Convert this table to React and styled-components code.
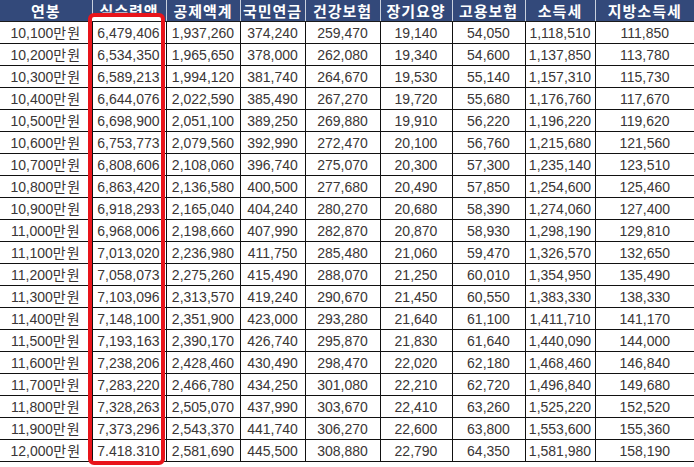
import React from "react";
import styled, { createGlobalStyle } from "styled-components";

const GlobalStyle = createGlobalStyle`
  body {
    margin: 0;
    background: #ffffff;
    font-family: "Liberation Sans", Arial, "Noto Sans CJK KR", sans-serif;
  }
`;

const columns = [
  { title: "연봉", width: 92 },
  { title: "실수령액", width: 74 },
  { title: "공제액계", width: 74 },
  { title: "국민연금", width: 65 },
  { title: "건강보험", width: 75 },
  { title: "장기요양", width: 72 },
  { title: "고용보험", width: 73 },
  { title: "소득세", width: 70 },
  { title: "지방소득세", width: 99 },
];

const rows = [
  ["10,100", "6,479,406", "1,937,260", "374,240", "259,470", "19,140", "54,050", "1,118,510", "111,850"],
  ["10,200", "6,534,350", "1,965,650", "378,000", "262,080", "19,340", "54,600", "1,137,850", "113,780"],
  ["10,300", "6,589,213", "1,994,120", "381,740", "264,670", "19,530", "55,140", "1,157,310", "115,730"],
  ["10,400", "6,644,076", "2,022,590", "385,490", "267,270", "19,720", "55,680", "1,176,760", "117,670"],
  ["10,500", "6,698,900", "2,051,100", "389,250", "269,880", "19,910", "56,220", "1,196,220", "119,620"],
  ["10,600", "6,753,773", "2,079,560", "392,990", "272,470", "20,100", "56,760", "1,215,680", "121,560"],
  ["10,700", "6,808,606", "2,108,060", "396,740", "275,070", "20,300", "57,300", "1,235,140", "123,510"],
  ["10,800", "6,863,420", "2,136,580", "400,500", "277,680", "20,490", "57,850", "1,254,600", "125,460"],
  ["10,900", "6,918,293", "2,165,040", "404,240", "280,270", "20,680", "58,390", "1,274,060", "127,400"],
  ["11,000", "6,968,006", "2,198,660", "407,990", "282,870", "20,870", "58,930", "1,298,190", "129,810"],
  ["11,100", "7,013,020", "2,236,980", "411,750", "285,480", "21,060", "59,470", "1,326,570", "132,650"],
  ["11,200", "7,058,073", "2,275,260", "415,490", "288,070", "21,250", "60,010", "1,354,950", "135,490"],
  ["11,300", "7,103,096", "2,313,570", "419,240", "290,670", "21,450", "60,550", "1,383,330", "138,330"],
  ["11,400", "7,148,100", "2,351,900", "423,000", "293,280", "21,640", "61,100", "1,411,710", "141,170"],
  ["11,500", "7,193,163", "2,390,170", "426,740", "295,870", "21,830", "61,640", "1,440,090", "144,000"],
  ["11,600", "7,238,206", "2,428,460", "430,490", "298,470", "22,020", "62,180", "1,468,460", "146,840"],
  ["11,700", "7,283,220", "2,466,780", "434,250", "301,080", "22,210", "62,720", "1,496,840", "149,680"],
  ["11,800", "7,328,263", "2,505,070", "437,990", "303,670", "22,410", "63,260", "1,525,220", "152,520"],
  ["11,900", "7,373,296", "2,543,370", "441,740", "306,270", "22,600", "63,800", "1,553,600", "155,360"],
  ["12,000", "7.418.310", "2,581,690", "445,500", "308,880", "22,790", "64,350", "1,581,980", "158,190"],
];

const Wrapper = styled.div`
  position: relative;
  width: 694px;
  height: 467px;
  overflow: hidden;
  background: #ffffff;
`;

const Table = styled.table`
  width: 694px;
  table-layout: fixed;
  border-collapse: collapse;
  border-spacing: 0;
`;

const HeadCell = styled.th`
  height: 21px;
  padding: 0;
  background: #33497a;
  color: #ffffff;
  font-family: "Noto Sans CJK KR", sans-serif;
  font-size: 15px;
  font-weight: 700;
  letter-spacing: 1px;
  line-height: 1;
  text-align: center;
  white-space: nowrap;
  overflow: hidden;
  border-left: 1px solid #c9d0dc;
  border-bottom: 1px solid #1b1b1b;

  &:first-child {
    border-left: none;
  }
`;

const Cell = styled.td`
  height: 21px;
  padding: ${(p) => (p.$right ? "0 6px 0 0" : "0")};
  color: #3a3636;
  font-size: 14px;
  line-height: 1;
  text-align: ${(p) => (p.$right ? "right" : "center")};
  white-space: nowrap;
  overflow: hidden;
  border-left: 1px solid #111111;
  border-bottom: 1px solid #111111;

  &:first-child {
    border-left: none;
  }
`;

const Unit = styled.span`
  font-family: "Noto Sans CJK KR", sans-serif;
  font-size: 14px;
  line-height: 1;
  letter-spacing: 1px;
`;

const Highlight = styled.div`
  position: absolute;
  left: 88px;
  top: 13px;
  width: 77px;
  height: 452px;
  box-sizing: border-box;
  border: 4px solid #e8141a;
  border-radius: 6px;
  background: linear-gradient(#ffffff 0, #ffffff 4px, transparent 4px);
  pointer-events: none;
`;

export default function App() {
  return (
    <>
      <GlobalStyle />
      <Wrapper>
        <Table>
          <colgroup>
            {columns.map((c) => (
              <col key={c.title} style={{ width: c.width }} />
            ))}
          </colgroup>
          <thead>
            <tr>
              {columns.map((c) => (
                <HeadCell key={c.title}>{c.title}</HeadCell>
              ))}
            </tr>
          </thead>
          <tbody>
            {rows.map((r) => (
              <tr key={r[0]}>
                <Cell>
                  {r[0]}
                  <Unit>만원</Unit>
                </Cell>
                {r.slice(1).map((v, i) => (
                  <Cell key={i} $right={i === 0}>
                    {v}
                  </Cell>
                ))}
              </tr>
            ))}
          </tbody>
        </Table>
        <Highlight />
      </Wrapper>
    </>
  );
}
